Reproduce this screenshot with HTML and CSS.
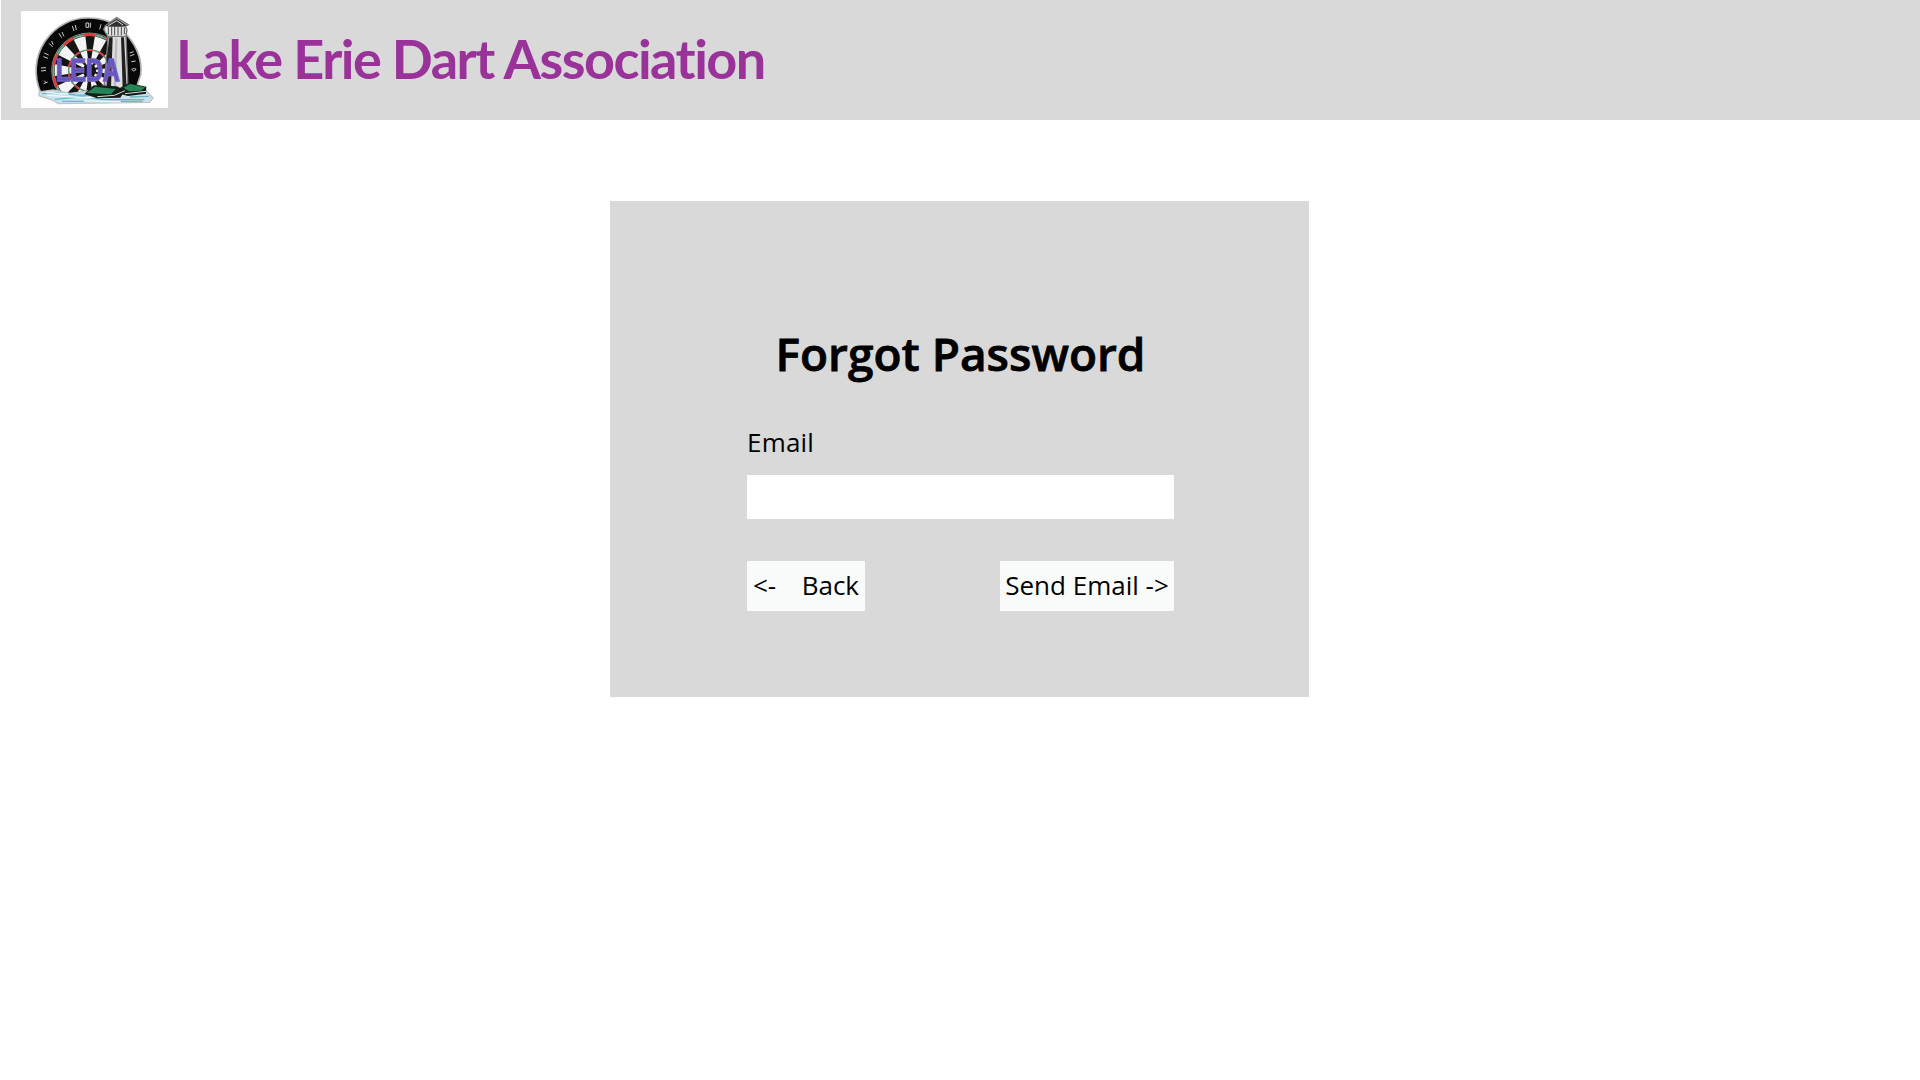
FILE: index.html
```html
<!DOCTYPE html>
<html lang="en">
<head>
<meta charset="utf-8">
<title>Forgot Password</title>
<link rel="stylesheet" href="styles.css">
</head>
<body>
<header class="site-header">
  <svg class="logo" viewBox="63 33 441 291" preserveAspectRatio="none" role="img" aria-label="Lake Erie Dart Association logo">
    <defs><clipPath id="shoreline"><path d="M90 40H450V281H90Z"/></clipPath></defs>
    <rect x="63" y="33" width="441" height="291" fill="#fff"/>
    <!-- dartboard -->
    <path d="M122 278C101 230 103 172 135 124C167 76 218 52 268 54C315 54 340 70 368 92C406 128 428 176 422 224L404 278Z" fill="#080808" stroke="#aeb2b2" stroke-width="5"/>
    <g clip-path="url(#shoreline)">
      <circle cx="268" cy="212" r="113" fill="#151515" stroke="#c9cfcb" stroke-width="2"/>
      <g fill="none">
        <circle cx="268" cy="212" r="62" pathLength="20" stroke="#f4f4f4" stroke-width="84" stroke-dasharray="1.1 .9" stroke-dashoffset=".55"/>
        <circle cx="268" cy="212" r="108" pathLength="20" stroke="#78a88b" stroke-width="6"/>
        <circle cx="268" cy="212" r="108" pathLength="20" stroke="#e23a3c" stroke-width="8" stroke-dasharray="1 1" stroke-dashoffset="-.5"/>
        <circle cx="268" cy="212" r="62" pathLength="20" stroke="#5c9c78" stroke-width="5"/>
        <circle cx="268" cy="212" r="62" pathLength="20" stroke="#d93b3e" stroke-width="6" stroke-dasharray="1 1" stroke-dashoffset="-.5"/>
      </g>
    </g>
    <!-- number marks on the rim -->
    <g fill="none" stroke="#c8c8c8" stroke-width="3">
      <path d="M131 251l12-5M133 242l7 7M123 213l15-2M123 204l15-1M130 170l14 5M133 159l13 6M147 130l11 11M155 123l4 11M177 100l8 13M186 96l6 13M217 78l5 15M226 75l3 15M258 69h8v13h-8zM271 68v15M303 73l-4 15M389 159l12-4M390 168l13-5M395 208q12-6 13 1q-8 8-13-1M394 185l13-2"/>
    </g>
    <!-- lighthouse -->
    <path d="M325 107L313 250L320 266H384L378 107Z" fill="#dedede" stroke="#777" stroke-width="4"/>
    <path d="M328 112L320 175V264H333L338 112ZM363 112L368 264H380L372 112Z" fill="#202020"/>
    <path d="M349 115L345 260" stroke="#bdbdbd" stroke-width="7"/>
    <path d="M311 88L316 77L350 53L385 74L376 79L381 90L377 109H323L317 98Z" fill="#e5e5e5" stroke="#737777" stroke-width="4"/>
    <path d="M317 78L350 56L381 76L369 80H327Z" fill="#303030"/>
    <path d="M325 77L350 62L369 75M316 96H378M323 105H377" fill="none" stroke="#e1e1e1" stroke-width="3"/>
    <path d="M325 82V104M335 81V106M344 80V106M354 80V106M364 81V106M373 82V103" stroke="#484848" stroke-width="3"/>
    <!-- shore and water -->
    <path d="M118 276L160 270L210 280L265 273L290 279L430 266L446 280L459 294L448 307L175 311L157 300L117 287Z" fill="#c7e3ed" stroke="#c1c4c4" stroke-width="4"/>
    <path d="M127 281L175 278L226 285L290 287M165 298L248 290L312 299L433 299M186 304H428M390 291L447 289" fill="none" stroke="#66b8ce" stroke-width="4"/>
    <path d="M141 286L240 292L306 292M252 303L362 305M137 277L205 282" fill="none" stroke="#eff8fa" stroke-width="4"/>
    <path d="M253 282L281 256L350 259L375 271L361 293L291 295Z" fill="#151b18"/>
    <path d="M260 279L285 260L347 267L333 283Z" fill="#268357"/>
    <path d="M361 263L386 249L439 260L438 281L384 288L359 281Z" fill="#121c16"/>
    <path d="M370 263L390 252L436 262L423 272L387 274Z" fill="#278456"/>
    <path d="M292 290L343 286L375 272M375 281L438 274" fill="none" stroke="#d9dedb" stroke-width="3"/>
    <text class="logo-letters" x="168" y="242" textLength="191" lengthAdjust="spacingAndGlyphs">LEDA</text>
  </svg>
  <h1 class="site-title">Lake Erie Dart Association</h1>
</header>
<main class="page">
  <form class="card">
    <h2 class="card-title">Forgot Password</h2>
    <label class="field-label" for="email">Email</label>
    <input class="field-input" id="email" type="email">
    <div class="actions">
      <button class="button button-back" type="button"><span>&lt;-</span><span>Back</span></button>
      <button class="button button-send" type="button">Send Email -&gt;</button>
    </div>
  </form>
</main>
</body>
</html>
```
FILE: styles.css
```css
* { box-sizing: border-box; }
body { margin: 0; background: #fff; color: #000; font-family: "Open Sans", "Noto Sans", sans-serif; }
.site-header { display: flex; align-items: flex-start; height: 120px; margin-left: 1px; padding: 11px 0 0 20px; background: #d9d9d9; }
.logo { flex: none; width: 147px; height: 97px; }
.logo-letters { font: bold 94px "Liberation Sans", sans-serif; fill: #6553bd; stroke: #7060c4; stroke-width: 5; }
.site-title { margin: 15px 0 0 8px; color: #993399; font: bold 54px/66px Lato, sans-serif; letter-spacing: -1.53px; white-space: nowrap; }
.page { display: flex; justify-content: center; padding: 81px 1px 0 0; }
.card { display: flex; flex-direction: column; width: 699px; height: 496px; padding: 119px 135px 0 137px; background: #d9d9d9; }
.card-title { margin: 0; font-size: 46px; font-weight: 600; line-height: 66px; text-align: center; white-space: nowrap; -webkit-text-stroke: .8px #000; }
.field-label { margin-top: 38px; font-size: 26px; line-height: 36px; letter-spacing: .2px; }
.field-input { width: 427px; height: 44px; margin-top: 15px; padding: 0 8px; border: 0; background: #fff; font: inherit; font-size: 26px; }
.actions { display: flex; justify-content: space-between; margin-top: 42px; }
.button { display: flex; align-items: center; height: 50px; padding: 0 6px 3px; border: 0; background: #f9fbfa; color: #000; font: 26px/36px "Open Sans", sans-serif; white-space: nowrap; }
.button-back { justify-content: space-between; width: 118px; }
.button-send { justify-content: center; width: 174px; }
```
